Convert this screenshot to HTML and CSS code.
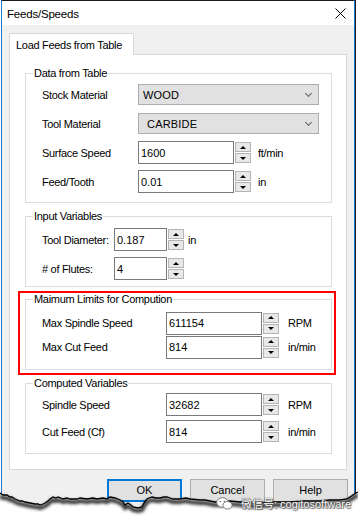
FILE: index.html
```html
<!DOCTYPE html>
<html lang="en">

<head>
    <meta charset="UTF-8">
    <meta name="viewport" content="width=device-width, initial-scale=1.0">
    <title>Feeds/Speeds</title>
    <link rel="stylesheet" href="styles.css">
</head>

<body>
    <div class="window">
        <div class="titlebar">
            <span class="title">Feeds/Speeds</span>
            <svg class="close" width="11" height="11" viewBox="0 0 11 11">
                <path d="M0.5 0.5 L10.5 10.5 M10.5 0.5 L0.5 10.5" stroke="#000" stroke-width="1" fill="none" />
            </svg>
        </div>
        <div class="client">
            <div class="tabs">
                <div class="tab">Load Feeds from Table</div>
            </div>
            <div class="panel">
                <div class="group g-data">
                    <span class="group-title">Data from Table</span>
                    <div class="row">
                        <span class="label">Stock Material</span>
                        <div class="combo">WOOD<span class="chev"></span></div>
                    </div>
                    <div class="row">
                        <span class="label">Tool Material</span>
                        <div class="combo combo-wide">CARBIDE<span class="chev"></span></div>
                    </div>
                    <div class="row">
                        <span class="label">Surface Speed</span>
                        <div class="field">1600</div>
                        <div class="spin"><b><i class="up"></i></b><b><i class="down"></i></b></div>
                        <span class="unit">ft/min</span>
                    </div>
                    <div class="row">
                        <span class="label">Feed/Tooth</span>
                        <div class="field">0.01</div>
                        <div class="spin"><b><i class="up"></i></b><b><i class="down"></i></b></div>
                        <span class="unit">in</span>
                    </div>
                </div>

                <div class="group g-input">
                    <span class="group-title">Input Variables</span>
                    <div class="row">
                        <span class="label">Tool Diameter:</span>
                        <div class="field">0.187</div>
                        <div class="spin"><b><i class="up"></i></b><b><i class="down"></i></b></div>
                        <span class="unit">in</span>
                    </div>
                    <div class="row">
                        <span class="label"># of Flutes:</span>
                        <div class="field">4</div>
                        <div class="spin"><b><i class="up"></i></b><b><i class="down"></i></b></div>
                    </div>
                </div>

                <div class="group g-limits">
                    <div class="redbox"></div>
                    <span class="group-title">Maimum Limits for Compution</span>
                    <div class="row">
                        <span class="label">Max Spindle Speed</span>
                        <div class="field">611154</div>
                        <div class="spin"><b><i class="up"></i></b><b><i class="down"></i></b></div>
                        <span class="unit">RPM</span>
                    </div>
                    <div class="row">
                        <span class="label">Max Cut Feed</span>
                        <div class="field">814</div>
                        <div class="spin"><b><i class="up"></i></b><b><i class="down"></i></b></div>
                        <span class="unit">in/min</span>
                    </div>
                </div>

                <div class="group g-computed">
                    <span class="group-title">Computed Variables</span>
                    <div class="row">
                        <span class="label">Spindle Speed</span>
                        <div class="field">32682</div>
                        <div class="spin"><b><i class="up"></i></b><b><i class="down"></i></b></div>
                        <span class="unit">RPM</span>
                    </div>
                    <div class="row">
                        <span class="label">Cut Feed (Cf)</span>
                        <div class="field">814</div>
                        <div class="spin"><b><i class="up"></i></b><b><i class="down"></i></b></div>
                        <span class="unit">in/min</span>
                    </div>
                </div>
            </div>

            <div class="buttons">
                <div class="btn btn-default">OK</div>
                <div class="btn">Cancel</div>
                <div class="btn">Help</div>
            </div>
        </div>
    </div>

    <!-- torn paper edge over the bottom of the capture -->
    <svg class="torn" width="358" height="40" viewBox="0 0 358 40">
        <defs>
            <filter id="soft" x="-5%" y="-50%" width="110%" height="200%">
                <feGaussianBlur stdDeviation="1.4" />
            </filter>
        </defs>
        <path fill="#fff" d="M0 13 L3 15 L7 15 L10 17 L12 17 L15 19 L20 21 L22 21 L25 22 L30 23 L35 24 L38 24 L40 25 L43 24 L45 23 L48 21 L50 19 L53 17 L56 18 L58 17 L63 19 L67 18 L70 19 L77 19 L80 18 L87 19 L93 18 L97 19 L103 18 L107 19 L110 17 L115 18 L120 20 L123 22 L125 25 L128 23 L131 25 L133 27 L138 28 L142 27 L144 23 L147 19 L152 17 L156 18 L160 18 L164 17 L167 17 L170 18 L173 19 L180 19 L186 18 L190 19 L200 20 L205 20 L210 21 L215 22 L220 22 L230 21 L240 22 L250 23 L263 23 L275 22 L290 22 L305 21 L320 21 L330 20 L340 20 L347 19 L350 17 L353 15 L356 13 L358 12 L358 40 L0 40 Z" />
        <polyline filter="url(#soft)" fill="none" stroke="#333" stroke-width="4" points="0,16 3,18 7,18 10,20 12,20 15,22 20,24 22,24 25,25 30,26 35,27 38,27 40,28 43,27 45,26 48,24 50,22 53,20 56,21 58,20 63,22 67,21 70,22 77,22 80,21 87,22 93,21 97,22 103,21 107,22 110,20 115,21 120,23 123,25 125,28 128,26 131,28 133,30 138,31 142,30 144,26 147,22 152,20 156,21 160,21 164,20 167,20 170,21 173,22 180,22 186,21 190,22 200,23 205,23 210,24 215,25 220,25 230,24 240,25 250,26 263,26 275,25 290,25 305,24 320,24 330,23 340,23 347,22 350,20 353,18 356,16 358,15" />
        <polyline fill="none" stroke="#000" stroke-width="1.3" points="0,13 3,15 7,15 10,17 12,17 15,19 20,21 22,21 25,22 30,23 35,24 38,24 40,25 43,24 45,23 48,21 50,19 53,17 56,18 58,17 63,19 67,18 70,19 77,19 80,18 87,19 93,18 97,19 103,18 107,19 110,17 115,18 120,20 123,22 125,25 128,23 131,25 133,27 138,28 142,27 144,23 147,19 152,17 156,18 160,18 164,17 167,17 170,18 173,19 180,19 186,18 190,19 200,20 205,20 210,21 215,22 220,22 230,21 240,22 250,23 263,23 275,22 290,22 305,21 320,21 330,20 340,20 347,19 350,17 353,15 356,13 358,12" />
    </svg>

    <div class="watermark">
        <svg class="wechat" width="17" height="13" viewBox="0 0 17 13">
            <ellipse cx="6.5" cy="5.5" rx="5.8" ry="4.8" fill="#fff" stroke="#777" stroke-width="1" />
            <ellipse cx="11.5" cy="8.3" rx="4.6" ry="3.8" fill="#fff" stroke="#777" stroke-width="1" />
            <circle cx="4.5" cy="4.5" r="0.8" fill="#777" />
            <circle cx="8.3" cy="4.5" r="0.8" fill="#777" />
        </svg>
        <span class="wm-text">微信号: cogitosoftware</span>
    </div>
</body>

</html>
```

FILE: styles.css
```css
* {
    margin: 0;
    padding: 0;
    box-sizing: border-box;
}

body {
    width: 358px;
    height: 519px;
    overflow: hidden;
    position: relative;
    background: #fff;
    font-family: "Liberation Sans", Arial, sans-serif;
    font-size: 11px;
    color: #000;
}

.window {
    width: 354px;
    height: 530px;
    margin-left: 1px;
    border: 1px solid #1c79d0;
    border-top-color: #1a1a1a;
    box-shadow: 1px 0 0 #222;
    background: #f0f0f0;
}

.titlebar {
    height: 24px;
    background: #fff;
    display: flex;
    align-items: center;
    justify-content: space-between;
    padding-left: 5px;
    padding-right: 8px;
}

.title {
    font-size: 11.5px;
    letter-spacing: -0.2px;
    padding-top: 1px;
}

.close {
    display: block;
}

.client {
    padding: 8px 7px 0 7px;
}

.tabs {
    display: flex;
    position: relative;
    z-index: 1;
    margin-bottom: -1px;
}

.tab {
    width: 125px;
    height: 22px;
    background: #fff;
    border: 1px solid #d9d9d9;
    border-bottom: none;
    padding-left: 6px;
    padding-top: 5px;
    letter-spacing: -0.3px;
}

.panel {
    width: 338px;
    height: 416px;
    background: #fff;
    border: 1px solid #d9d9d9;
    padding: 18px 0 0 15px;
}

.group {
    position: relative;
    width: 307px;
    border: 1px solid #dcdcdc;
    padding-left: 16px;
}

.group-title {
    position: absolute;
    top: -7px;
    left: 7px;
    line-height: 13px;
    padding: 0 1px;
    background: #fff;
    letter-spacing: -0.3px;
}

.g-data {
    height: 130px;
    padding-top: 6px;
}

.g-input {
    height: 71px;
    margin-top: 13px;
    padding-top: 8px;
}

.g-limits {
    height: 71px;
    margin-top: 12px;
    padding-top: 11px;
}

.g-computed {
    height: 71px;
    margin-top: 13px;
    padding-top: 7px;
}

.redbox {
    position: absolute;
    left: -8px;
    top: -9px;
    right: -5px;
    bottom: -6px;
    border: 2px solid #f00;
}

.row {
    display: flex;
    align-items: center;
    height: 29px;
}

.g-limits .row {
    height: 24px;
}

.g-computed .row {
    height: 27px;
}

.label {
    width: 96px;
    flex-shrink: 0;
    letter-spacing: -0.3px;
}

.g-input .label {
    width: 72px;
}

.g-limits .label,
.g-computed .label {
    width: 124px;
}

.combo {
    position: relative;
    width: 181px;
    height: 21px;
    background: #e1e1e1;
    border: 1px solid #adadad;
    padding-left: 4px;
    display: flex;
    align-items: center;
    letter-spacing: 0.2px;
}

.combo-wide {
    padding-left: 8px;
}

.chev {
    position: absolute;
    right: 7px;
    top: 6px;
    width: 5px;
    height: 5px;
    border-right: 1px solid #606060;
    border-bottom: 1px solid #606060;
    transform: rotate(45deg);
}

.field {
    width: 96px;
    height: 23px;
    background: #fff;
    border: 1px solid #7a7a7a;
    padding-left: 2px;
    display: flex;
    align-items: center;
}

.g-input .field {
    width: 53px;
}

.spin {
    width: 16px;
    height: 21px;
    margin-left: 1px;
    display: flex;
    flex-direction: column;
    gap: 1px;
}

.spin b {
    flex: 1;
    background: #e8e8e8;
    border: 1px solid #b4b4b4;
    display: flex;
    align-items: center;
    justify-content: center;
}

.spin i {
    width: 0;
    height: 0;
    border-left: 3px solid transparent;
    border-right: 3px solid transparent;
}

.spin i.up {
    border-bottom: 3px solid #000;
}

.spin i.down {
    border-top: 3px solid #000;
}

.unit {
    margin-left: 7px;
    letter-spacing: -0.3px;
}

.g-input .unit {
    margin-left: 4px;
}

.g-limits .unit,
.g-computed .unit {
    margin-left: 9px;
}

.buttons {
    display: flex;
    justify-content: flex-end;
    gap: 8px;
    margin-top: 9px;
    margin-right: -1px;
}

.btn {
    width: 75px;
    height: 23px;
    background: #e1e1e1;
    border: 1px solid #adadad;
    display: flex;
    align-items: center;
    justify-content: center;
    padding-bottom: 2px;
}

.btn-default {
    border: 2px solid #0078d7;
}

.torn {
    position: absolute;
    left: 0;
    top: 480px;
}

.watermark {
    position: absolute;
    left: 216px;
    top: 495px;
    display: flex;
    align-items: center;
    gap: 8px;
}

.wechat {
    display: block;
}

.wm-text {
    font-family: "Liberation Sans", "Noto Sans CJK SC", sans-serif;
    font-size: 11px;
    color: #fff;
    text-shadow: 0 0 1px #444, 0 0 1px #444, 1px 1px 1px #666;
}
```
